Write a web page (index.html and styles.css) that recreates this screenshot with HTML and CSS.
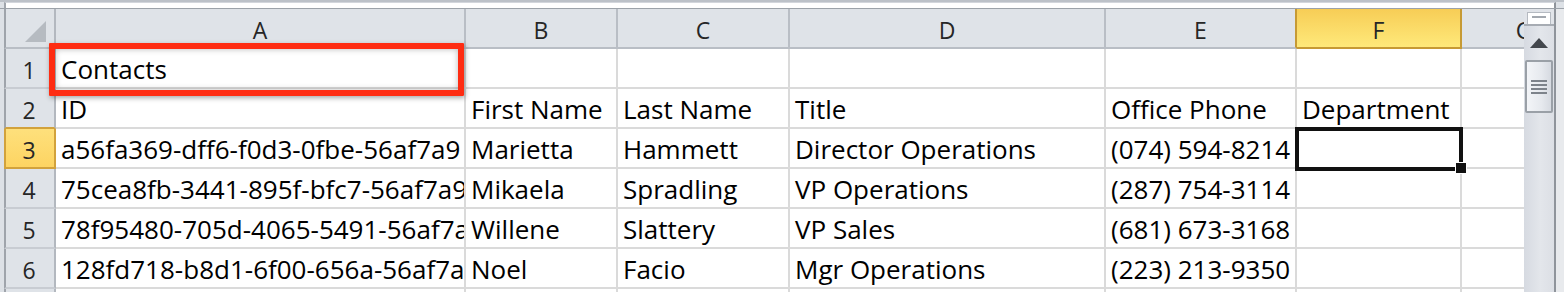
FILE: index.html
```html
<!DOCTYPE html>
<html>
<head>
<meta charset="utf-8">
<title>Contacts</title>
<link rel="stylesheet" href="styles.css">
</head>
<body>
<div class="window">
  <div class="topbar"><div class="topbar-field"></div></div>
  <div class="main">
    <div class="gutter"></div>
    <div class="sheet">
      <div class="grid">
        <div class="ch rh corner"><svg class="corner-tri" width="21" height="21" viewBox="0 0 21 21"><polygon points="21,0 21,21 0,21" fill="#b6bbc1"/></svg></div>
        <div class="ch">A</div>
        <div class="ch">B</div>
        <div class="ch">C</div>
        <div class="ch">D</div>
        <div class="ch pre">E</div>
        <div class="ch sel">F</div>
        <div class="ch">G</div>

        <div class="rh">1</div>
        <div class="c">Contacts</div>
        <div class="c"></div><div class="c"></div><div class="c"></div><div class="c"></div><div class="c"></div><div class="c"></div>

        <div class="rh pre">2</div>
        <div class="c">ID</div>
        <div class="c">First Name</div>
        <div class="c">Last Name</div>
        <div class="c">Title</div>
        <div class="c">Office Phone</div>
        <div class="c">Department</div>
        <div class="c"></div>

        <div class="rh sel">3</div>
        <div class="c">a56fa369-dff6-f0d3-0fbe-56af7a9</div>
        <div class="c">Marietta</div>
        <div class="c">Hammett</div>
        <div class="c">Director Operations</div>
        <div class="c">(074) 594-8214</div>
        <div class="c"></div>
        <div class="c"></div>

        <div class="rh">4</div>
        <div class="c">75cea8fb-3441-895f-bfc7-56af7a9</div>
        <div class="c">Mikaela</div>
        <div class="c">Spradling</div>
        <div class="c">VP Operations</div>
        <div class="c">(287) 754-3114</div>
        <div class="c"></div>
        <div class="c"></div>

        <div class="rh">5</div>
        <div class="c">78f95480-705d-4065-5491-56af7ac</div>
        <div class="c">Willene</div>
        <div class="c">Slattery</div>
        <div class="c">VP Sales</div>
        <div class="c">(681) 673-3168</div>
        <div class="c"></div>
        <div class="c"></div>

        <div class="rh">6</div>
        <div class="c">128fd718-b8d1-6f00-656a-56af7a9</div>
        <div class="c">Noel</div>
        <div class="c">Facio</div>
        <div class="c">Mgr Operations</div>
        <div class="c">(223) 213-9350</div>
        <div class="c"></div>
        <div class="c"></div>

        <div class="rh">7</div>
        <div class="c"></div><div class="c"></div><div class="c"></div><div class="c"></div><div class="c"></div><div class="c"></div><div class="c"></div>
      </div>
      <div class="selection"></div>
      <div class="handle"></div>
      <div class="annot"></div>
    </div>
    <div class="vscroll">
      <div class="split"><div class="split-box"><span class="split-bar"></span></div></div>
      <svg class="up" width="18" height="10" viewBox="0 0 18 10"><polygon points="9,0 18,10 0,10" fill="#43474d"/></svg>
      <div class="thumb">
        <span class="grip"></span><span class="grip"></span><span class="grip"></span><span class="grip"></span>
      </div>
    </div>
    <div class="rightedge"></div>
  </div>
</div>
</body>
</html>
```
FILE: styles.css
```css
* { box-sizing: border-box; }
html, body { margin: 0; padding: 0; }
body {
  width: 1564px;
  height: 292px;
  overflow: hidden;
  background: #dfe2e7;
  font-family: "Open Sans", "Liberation Sans", sans-serif;
}
.window { display: flex; flex-direction: column; height: 292px; }

.topbar {
  height: 9px;
  display: flex;
  background: #dde1e6;
  border-top: 2px solid #bcc1c8;
  border-bottom: 1px solid #9ca2a9;
  padding-left: 4px;
  flex-shrink: 0;
}
.topbar-field {
  width: 1552px;
  background: #fff;
  border-left: 2px solid #a0a5ac;
  border-right: 2px solid #8f949b;
  border-top: 1px solid #d3d6dc;
}

.main { flex: 1; display: flex; min-height: 0; }
.gutter { width: 4px; flex-shrink: 0; background: #dde1e6; }
.sheet {
  position: relative;
  width: 1520px;
  flex-shrink: 0;
  overflow: hidden;
  background: #fff;
}
.grid {
  display: grid;
  grid-template-columns: 52px 410px 152px 172px 316px 191px 165px 126px;
  grid-auto-rows: 40px;
}

.c {
  border-right: 2px solid #dadada;
  border-bottom: 2px solid #dadada;
  padding: 3px 0 0 5px;
  font-size: 26px;
  line-height: 35px;
  white-space: nowrap;
  overflow: hidden;
  color: #000;
}

.ch {
  background: #dfe3e8;
  border-right: 2px solid #b9bec5;
  border-bottom: 2px solid #b9bec5;
  text-align: center;
  font-size: 23px;
  line-height: 34px;
  padding-top: 4px;
  color: #262626;
  white-space: nowrap;
  overflow: hidden;
}
.ch.pre { border-right-color: #c69a34; }
.ch.sel {
  background: linear-gradient(180deg, #f7cd56, #fee97a);
  border-right-color: #c69a34;
  border-bottom-color: #c69a34;
}

.rh {
  background: #dfe3e8;
  border-left: 2px solid #9fa4ab;
  border-right: 2px solid #b3b8bf;
  border-bottom: 2px solid #c8ccd2;
  text-align: center;
  font-size: 23px;
  line-height: 34px;
  padding: 4px 2px 0 0;
  color: #262626;
}
.rh.pre { border-bottom-color: #d2a23c; }
.rh.sel {
  background: linear-gradient(180deg, #fee07c, #fdd462);
  border-left-color: #d2a23c;
  border-right-color: #d2a23c;
  border-bottom-color: #d2a23c;
}
.corner {
  display: flex;
  align-items: flex-end;
  justify-content: flex-end;
  padding: 0 8px 5px 0;
  border-bottom-color: #b9bec5;
}
.corner-tri { display: block; }

.selection {
  position: absolute;
  left: 1291px;
  top: 118px;
  width: 168px;
  height: 44px;
  border: 4px solid #111;
}
.handle {
  position: absolute;
  left: 1451px;
  top: 153px;
  width: 12px;
  height: 12px;
  background: #111;
  border: 1px solid #fff;
}

.annot {
  position: absolute;
  left: 45px;
  top: 34px;
  width: 415px;
  height: 53px;
  border: 6px solid #fe2c12;
  border-radius: 1px;
  box-shadow: 1px 2px 5px rgba(0, 0, 0, 0.35), inset 0 0 6px rgba(0, 0, 0, 0.28);
}

.vscroll {
  width: 32px;
  flex-shrink: 0;
  border-right: 2px solid #8f949b;
  background: linear-gradient(90deg, #d6dae1, #e3e6eb 55%, #dcdfe5);
  display: flex;
  flex-direction: column;
  align-items: center;
}
.split {
  align-self: stretch;
  height: 17px;
  border-bottom: 2px solid #a7acb3;
  padding: 3px 3px 0;
  background: #e1e4e9;
}
.split-box {
  height: 12px;
  background: #fff;
  border: 1px solid #b5bac1;
  border-bottom: 0;
  display: flex;
  justify-content: center;
  padding-top: 3px;
}
.split-bar { width: 14px; height: 2px; background: #a3a8af; }
.up { display: block; margin-top: 12px; }
.thumb {
  margin-top: 12px;
  width: 28px;
  height: 53px;
  border: 2px solid #9aa0a7;
  border-radius: 2px;
  background: linear-gradient(90deg, #f3f5f8, #e6e9ee 60%, #d6dae1);
  display: flex;
  flex-direction: column;
  justify-content: center;
  align-items: center;
  gap: 2px;
}
.grip { display: block; width: 16px; height: 2px; background: #7d838b; }
.rightedge { flex: 1; background: #e8eaed; }
```
